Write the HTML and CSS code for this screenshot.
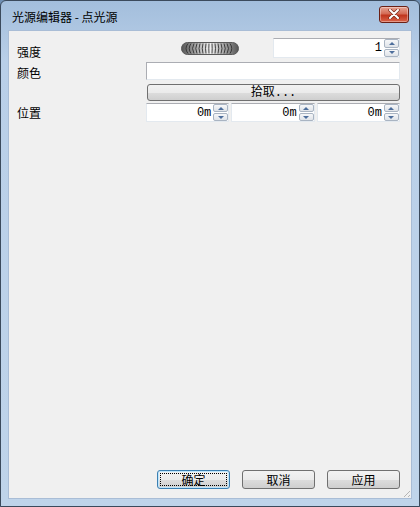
FILE: index.html
```html
<!DOCTYPE html>
<html lang="zh-CN">
<head>
  <meta charset="UTF-8" />
  <title>光源编辑器 - 点光源</title>
  <link rel="stylesheet" href="styles.css">
</head>
<body>
  <div class="window">
    <!-- title bar -->
    <div class="titlebar">
      <span class="title">光源编辑器 - 点光源</span>
      <button class="close-btn" aria-label="关闭">
        <svg width="14" height="10" viewBox="0 0 14 10">
          <path d="M3 1 L11 9 M11 1 L3 9" stroke="#7a2a1c" stroke-width="3.4" stroke-linecap="round"/>
          <path d="M3 1 L11 9 M11 1 L3 9" stroke="#ffffff" stroke-width="2" stroke-linecap="round"/>
        </svg>
      </button>
    </div>

    <div class="client">
      <div class="form">
        <div class="row row-intensity">
          <span class="label">强度</span>
          <div class="dial-wrap">
            <svg class="dial" width="58" height="13" viewBox="0 0 58 13">
              <defs>
                <linearGradient id="dg" x1="0" y1="0" x2="1" y2="0">
                  <stop offset="0" stop-color="#555"/>
                  <stop offset="0.5" stop-color="#f2f2f2"/>
                  <stop offset="1" stop-color="#555"/>
                </linearGradient>
              </defs>
              <rect x="0.5" y="0.5" width="57" height="12" rx="6" fill="url(#dg)" stroke="#5a5a5a"/>
              <g fill="none" stroke="#303030" stroke-width="0.9">
                <path d="M7 1.5 Q3 6.5 7 11.5"/>
                <path d="M10 1.5 Q6.5 6.5 10 11.5"/>
                <path d="M13 1.5 Q10 6.5 13 11.5"/>
                <path d="M16 1.5 Q13.5 6.5 16 11.5"/>
                <path d="M19 1.5 Q17 6.5 19 11.5"/>
                <path d="M22 1.5 Q20.5 6.5 22 11.5"/>
                <path d="M25 1.5 Q24 6.5 25 11.5"/>
                <path d="M28 1.5 Q27.6 6.5 28 11.5"/>
                <path d="M31 1.5 Q31.4 6.5 31 11.5"/>
                <path d="M34 1.5 Q35 6.5 34 11.5"/>
                <path d="M37 1.5 Q38.5 6.5 37 11.5"/>
                <path d="M40 1.5 Q42 6.5 40 11.5"/>
                <path d="M43 1.5 Q45.5 6.5 43 11.5"/>
                <path d="M46 1.5 Q49 6.5 46 11.5"/>
                <path d="M49 1.5 Q52.5 6.5 49 11.5"/>
              </g>
            </svg>
          </div>
          <div class="spin spin-wide">
            <span class="spin-value">1</span>
            <div class="spin-btns">
              <span class="spin-btn up"></span>
              <span class="spin-btn down"></span>
            </div>
          </div>
        </div>

        <div class="row row-color">
          <span class="label">颜色</span>
          <div class="color-field"></div>
        </div>

        <div class="row row-pick">
          <span class="label"></span>
          <button class="pick-btn">拾取...</button>
        </div>

        <div class="row row-pos">
          <span class="label">位置</span>
          <div class="pos-group">
            <div class="spin">
              <span class="spin-value">0m</span>
              <div class="spin-btns">
                <span class="spin-btn up"></span>
                <span class="spin-btn down"></span>
              </div>
            </div>
            <div class="spin">
              <span class="spin-value">0m</span>
              <div class="spin-btns">
                <span class="spin-btn up"></span>
                <span class="spin-btn down"></span>
              </div>
            </div>
            <div class="spin">
              <span class="spin-value">0m</span>
              <div class="spin-btns">
                <span class="spin-btn up"></span>
                <span class="spin-btn down"></span>
              </div>
            </div>
          </div>
        </div>
      </div>

      <div class="actions">
        <button class="btn default"><span class="focus">确定</span></button>
        <button class="btn">取消</button>
        <button class="btn">应用</button>
      </div>
      <div class="grip"></div>
    </div>
  </div>
</body>
</html>
```

FILE: styles.css
```css
html, body {
  margin: 0;
  padding: 0;
  height: 100%;
  overflow: hidden;
  background: #6f8fb3;
  font-family: "Noto Sans CJK SC", "DejaVu Sans", sans-serif;
  font-size: 12px;
  color: #000;
}

.window {
  box-sizing: border-box;
  width: 420px;
  height: 507px;
  display: flex;
  flex-direction: column;
  border: 1px solid #3b4a5c;
  border-radius: 6px 6px 0 0;
  background: linear-gradient(to bottom, #a3bedc 0, #b9cfe8 60px, #bfd4ea 100%);
}

.titlebar {
  height: 29px;
  display: flex;
  align-items: center;
  justify-content: space-between;
  padding: 0 10px 0 11px;
  flex-shrink: 0;
}

.title {
  line-height: 12px;
  margin-top: 2px;
}

.close-btn {
  width: 30px;
  height: 17px;
  margin-top: -3px;
  padding: 0;
  border: 1px solid #6b2015;
  border-radius: 3px;
  background: linear-gradient(to bottom, #e7a493 0, #d46b55 45%, #c0351d 55%, #d9644a 100%);
  display: flex;
  align-items: center;
  justify-content: center;
  box-shadow: inset 0 0 0 1px rgba(255, 255, 255, 0.35);
}

.client {
  position: relative;
  flex: 1;
  margin: 0 7px 7px 7px;
  background: #f0f0f0;
  display: flex;
  flex-direction: column;
  border: 1px solid #a9bdd6;
}

.form {
  display: flex;
  flex-direction: column;
  padding: 7px 11px 0 8px;
}

.row {
  display: flex;
  align-items: center;
}

.label {
  width: 129px;
  flex-shrink: 0;
}

.row-intensity {
  height: 20px;
}

.row-intensity .label {
  margin-top: 6px;
}

.dial-wrap {
  flex: 1;
  display: flex;
  justify-content: center;
  padding-top: 1px;
}

.dial {
  display: block;
}

.spin {
  box-sizing: border-box;
  height: 19px;
  display: flex;
  align-items: center;
  background: #fff;
  border: 1px solid #e3e9ef;
  border-top-color: #abadb3;
  flex: 1;
}

.spin-wide {
  flex: 0 0 127px;
  height: 20px;
}

.spin-value {
  flex: 1;
  text-align: right;
  padding-right: 2px;
  line-height: 12px;
  font-family: "Liberation Mono", "Noto Sans CJK SC", monospace;
  font-size: 12px;
}

.spin-btns {
  display: flex;
  flex-direction: column;
  width: 15px;
  height: 100%;
  gap: 1px;
}

.spin-btn {
  flex: 1;
  box-sizing: border-box;
  border: 1px solid #a9b4c2;
  border-radius: 2px;
  background: linear-gradient(to bottom, #f6f7f9, #dfe3e8);
  display: flex;
  align-items: center;
  justify-content: center;
}

.spin-btn.up::before,
.spin-btn.down::before {
  content: "";
  width: 0;
  height: 0;
  border-left: 3px solid transparent;
  border-right: 3px solid transparent;
}

.spin-btn.up::before {
  border-bottom: 3px solid #4d6e9c;
}

.spin-btn.down::before {
  border-top: 3px solid #4d6e9c;
}

.row-color {
  margin-top: 4px;
  height: 18px;
}

.row-color .label {
  margin-top: 3px;
}

.color-field {
  flex: 1;
  box-sizing: border-box;
  height: 18px;
  background: #fff;
  border: 1px solid #e3e9ef;
  border-top-color: #abadb3;
  border-left-color: #abadb3;
}

.row-pick {
  margin-top: 4px;
  height: 17px;
}

.pick-btn {
  flex: 1;
  height: 17px;
  margin-left: 1px;
  padding: 0;
  font-family: "Liberation Mono", "Noto Sans CJK SC", monospace;
  font-size: 12px;
  line-height: 12px;
  border: 1px solid #707070;
  border-radius: 3px;
  background: linear-gradient(to bottom, #f2f2f2 0, #ebebeb 50%, #dddddd 51%, #cfcfcf 100%);
}

.row-pos {
  margin-top: 2px;
  height: 19px;
}

.pos-group {
  flex: 1;
  display: flex;
  gap: 2px;
}

.actions {
  margin-top: auto;
  display: flex;
  justify-content: flex-end;
  gap: 12px;
  padding: 0 11px 9px 0;
}

.btn {
  box-sizing: border-box;
  width: 73px;
  height: 19px;
  padding: 0;
  font: inherit;
  line-height: 12px;
  border: 1px solid #707070;
  border-radius: 3px;
  background: linear-gradient(to bottom, #f2f2f2 0, #ebebeb 50%, #dddddd 51%, #cfcfcf 100%);
}

.btn.default {
  border-color: #3c7fb1;
  box-shadow: inset 0 0 0 1px #bee6fd;
  display: flex;
  align-items: center;
  justify-content: center;
  padding: 2px;
}

.focus {
  flex: 1;
  align-self: stretch;
  display: flex;
  align-items: center;
  justify-content: center;
  border: 1px dotted #000;
}

.grip {
  position: absolute;
  right: 1px;
  bottom: 1px;
  width: 9px;
  height: 9px;
  background: repeating-linear-gradient(135deg, transparent 0, transparent 2px, #b5b5b5 2px, #b5b5b5 3px);
  clip-path: polygon(100% 0, 100% 100%, 0 100%);
}
```
